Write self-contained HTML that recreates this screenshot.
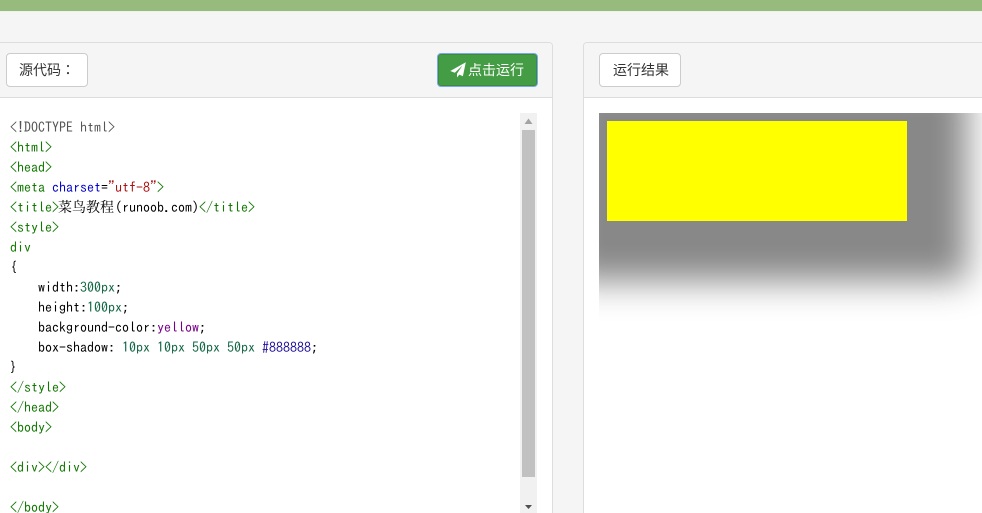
<!DOCTYPE html>
<html><head><meta charset="utf-8"><title>源代码</title>
<style>
html,body{margin:0;padding:0;width:982px;height:513px;overflow:hidden;background:#f5f5f5;font-family:"Liberation Sans","Noto Sans CJK SC",sans-serif}
#wrap{position:relative;width:982px;height:513px;overflow:hidden;background:#f5f5f5}
.a{position:absolute;box-sizing:border-box}
.btn{background:#fff;border:1px solid #ccc;border-radius:4px;font-size:14px;line-height:32px;color:#333;height:34px;width:82px;top:53px;white-space:nowrap}
#code{left:10px;top:117px;width:505px;height:396px;overflow:hidden;font:14px/20px "IPAGothic","Liberation Mono",monospace;color:#000;white-space:pre}
#code div{height:20px;overflow:visible}
.g{color:#170}.b{color:#00c}.r{color:#a11}.n{color:#164}.p{color:#708}.d{color:#219}.k{color:#555}
.cn{font-family:"Noto Serif CJK SC",serif;font-size:14px;line-height:1px;margin-left:-1px;margin-right:1px}
.tc{font-family:"Noto Sans CJK TC",sans-serif}
</style></head><body><div id="wrap">
<div class="a" style="left:0;top:0;width:982px;height:11px;background:#96bb7c"></div>
<div class="a" style="left:0;top:11px;width:982px;height:1px;background:#eef2ea"></div>

<div class="a" style="left:-5px;top:42px;width:558px;height:480px;border:1px solid #ddd;border-radius:4px;background:#fff;overflow:hidden">
  <div style="height:54px;background:#f5f5f5;border-bottom:1px solid #ddd"></div>
</div>
<div class="a" style="left:583px;top:42px;width:410px;height:480px;border:1px solid #ddd;border-radius:4px;background:#fff;overflow:hidden">
  <div style="height:54px;background:#f5f5f5;border-bottom:1px solid #ddd"></div>
</div>

<div class="a btn" style="left:6px;padding-left:12px">源代码<span class="tc">：</span></div>
<div class="a btn" style="left:599px;padding-left:13px">运行结果</div>

<div class="a" style="left:437px;top:53px;width:101px;height:34px;background:#449d44;border:1px solid #7aa7ee;border-radius:4px;box-shadow:inset 0 0 0 1px #3b8a3f;color:#fff;font-size:14px;line-height:32px;padding-left:30px;white-space:nowrap">点击运行
  <svg style="position:absolute;left:12px;top:8px" width="16" height="16" viewBox="0 0 16 16"><path d="M15.8 .2 L.3 9 L4.8 10.8 L12.5 3.5 L7 11.6 L7 15.4 L9.4 12.6 L12.9 14.2 Z" fill="#fff"/></svg>
</div>

<div class="a" id="code"><div class="k">&lt;!DOCTYPE html&gt;</div><div class="g">&lt;html&gt;</div><div class="g">&lt;head&gt;</div><div><span class="g">&lt;meta </span><span class="b">charset</span>=<span class="r">"utf-8"</span><span class="g">&gt;</span></div><div><span class="g">&lt;title&gt;</span><span class="cn">菜鸟教程</span>(runoob.com)<span class="g">&lt;/title&gt;</span></div><div class="g">&lt;style&gt;</div><div class="g">div</div><div>{</div><div>    width:<span class="n">300px</span>;</div><div>    height:<span class="n">100px</span>;</div><div>    background-color:<span class="p">yellow</span>;</div><div>    box-shadow: <span class="n">10px 10px 50px 50px</span> <span class="d">#888888</span>;</div><div>}</div><div class="g">&lt;/style&gt;</div><div class="g">&lt;/head&gt;</div><div class="g">&lt;body&gt;</div><div> </div><div class="g">&lt;div&gt;&lt;/div&gt;</div><div> </div><div class="g">&lt;/body&gt;</div></div>

<div class="a" style="left:520px;top:113px;width:17px;height:400px;background:#f1f1f1">
  <svg style="position:absolute;left:0;top:0" width="17" height="17"><path d="M8.5 5.5 L12.5 11 L4.5 11 Z" fill="#a3a3a3"/></svg>
  <div class="a" style="left:2px;top:17px;width:13px;height:347px;background:#c1c1c1"></div>
  <svg style="position:absolute;left:0;top:386px" width="17" height="14"><path d="M5 6 L12 6 L8.5 10 Z" fill="#505050"/></svg>
</div>

<div class="a" style="left:599px;top:113px;width:383px;height:400px;background:#fff;overflow:hidden">
  <div class="a" style="left:8px;top:8px;width:300px;height:100px;background:#ff0;box-shadow:10px 10px 33px 50px #888"></div>
</div>
</div></body></html>
